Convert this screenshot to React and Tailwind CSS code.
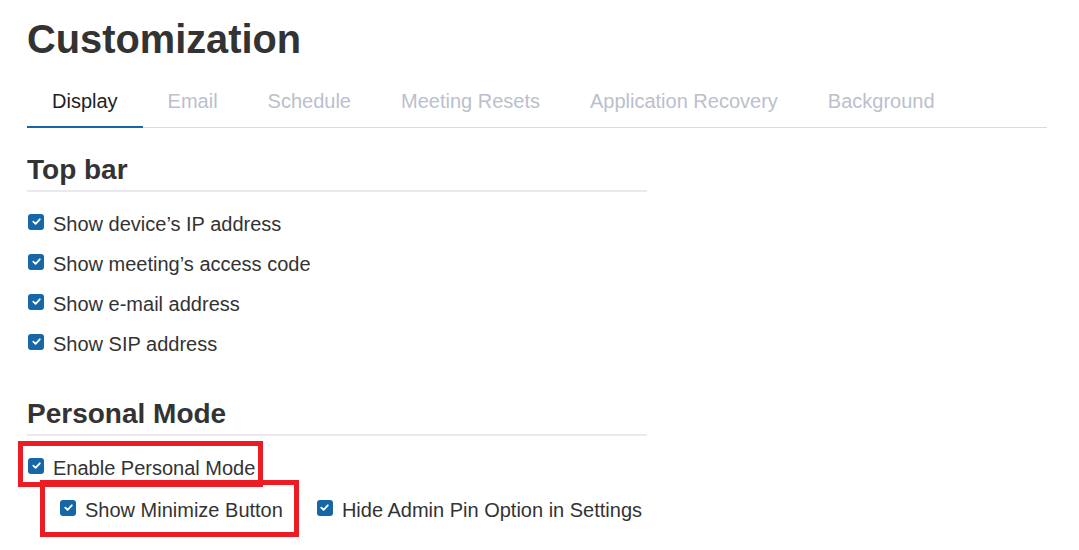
import React from "react";

const tabs = ["Display", "Email", "Schedule", "Meeting Resets", "Application Recovery", "Background"];

function Check() {
  return (
    <span className="mt-[2px] flex h-[16px] w-[16px] shrink-0 items-center justify-center rounded-[3px] bg-[#1766a6]">
      <svg width="11" height="11" viewBox="0 0 12 12" fill="none">
        <path d="M2.5 6.2 L5 8.6 L9.6 3.6" stroke="white" strokeWidth="2" strokeLinecap="round" strokeLinejoin="round" />
      </svg>
    </span>
  );
}

function Item({ children, className = "" }) {
  return (
    <div className={"relative flex items-start gap-[9px] pl-[1px] text-[20px] leading-[24px] text-[#333333] " + className}>
      <Check />
      <span>{children}</span>
    </div>
  );
}

export default function App() {
  return (
    <div className="min-h-[550px] w-[1079px] bg-white px-[27px] pt-[15px] font-['Liberation_Sans',Arial,sans-serif] text-[#333333]">
      <h1 className="text-[39.8px] font-bold leading-[48px] text-[#333333]">Customization</h1>

      <div className="mt-[26px] flex w-[1020px] border-b-[1.5px] border-[#d9dae3]">
        {tabs.map((t, i) => (
          <div
            key={t}
            className={
              "-mb-[1.5px] px-[25px] pb-[13px] text-[20px] leading-[24px] " +
              (i === 0 ? "border-b-2 border-[#1766a6] text-[#1e1e1e]" : "border-b-2 border-transparent text-[#bac0cc]")
            }
          >
            {t}
          </div>
        ))}
      </div>

      <div className="w-[620px]">
        <h2 className="mt-[26px] border-b-2 border-[#e9e9ef] pb-[4px] text-[28px] font-bold leading-[32px] text-[#333333]">Top bar</h2>
        <div className="mt-[20px] flex flex-col gap-[16px]">
          <Item>Show device’s IP address</Item>
          <Item>Show meeting’s access code</Item>
          <Item>Show e-mail address</Item>
          <Item>Show SIP address</Item>
        </div>

        <h2 className="mt-[42px] border-b-2 border-[#e9e9ef] pb-[4px] text-[28px] font-bold leading-[32px] text-[#333333]">Personal Mode</h2>
        <div className="mt-[20px]">
          <div className="relative">
            <Item>Enable Personal Mode</Item>
            <span className="pointer-events-none absolute left-[-9px] top-[-15px] h-[46px] w-[245px] border-[5px] border-[#ec1c24]" />
          </div>
          <div className="mt-[18px] flex items-start pl-[32px]">
            <div className="relative">
              <Item>Show Minimize Button</Item>
              <span className="pointer-events-none absolute left-[-19px] top-[-18px] h-[57px] w-[259px] border-[5px] border-[#ec1c24]" />
            </div>
            <Item className="ml-[33px]">Hide Admin Pin Option in Settings</Item>
          </div>
        </div>
      </div>
    </div>
  );
}
